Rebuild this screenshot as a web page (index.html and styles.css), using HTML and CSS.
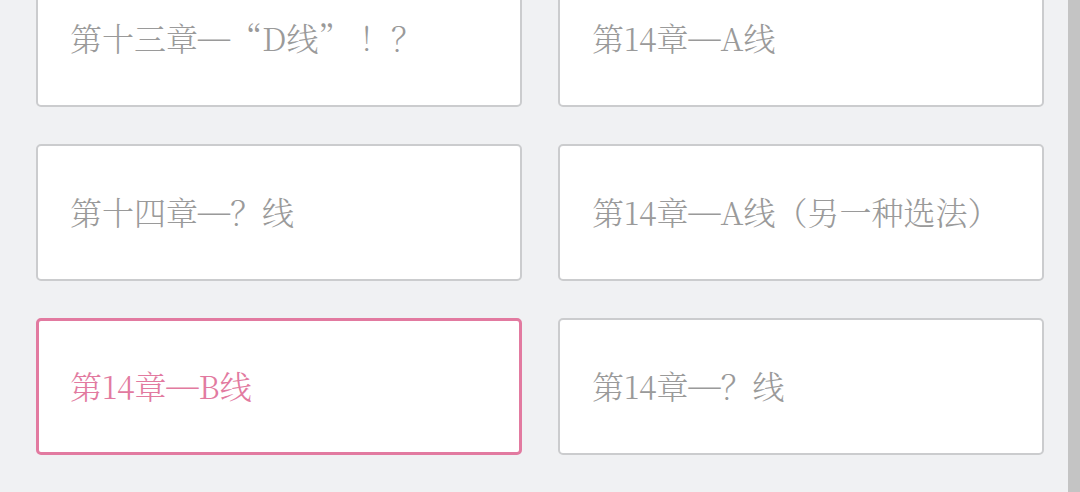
FILE: index.html
```html
<!DOCTYPE html>
<html lang="zh-CN">
<head>
    <meta charset="UTF-8">
    <meta name="viewport" content="width=device-width, initial-scale=1.0">
    <title>章节列表</title>
    <link rel="stylesheet" href="styles.css">
</head>
<body>

<div class="page">
    <div class="chapter-list">
        <a href="#" class="chapter">第十三章<span class="dash">—</span>“D线” ！？</a>
        <a href="#" class="chapter">第14章<span class="dash">—</span>A线</a>
        <a href="#" class="chapter">第十四章<span class="dash">—</span>？线</a>
        <a href="#" class="chapter">第14章<span class="dash">—</span>A线（另一种选法）</a>
        <a href="#" class="chapter current">第14章<span class="dash">—</span>B线</a>
        <a href="#" class="chapter">第14章<span class="dash">—</span>？线</a>
    </div>
    <!-- scroll bar track -->
    <div class="scrollbar"></div>
</div>

</body>
</html>
```

FILE: styles.css
```css
html, body {
    margin: 0;
    padding: 0;
    height: 100%;
    overflow: hidden;
}

body {
    background-color: #f0f1f3;
    font-family: "Noto Serif CJK SC", "Liberation Serif", serif;
}

.page {
    display: flex;
    height: 100%;
}

.chapter-list {
    flex: 1;
    display: grid;
    grid-template-columns: 486px 486px;
    grid-auto-rows: 137px;
    column-gap: 36px;
    row-gap: 37px;
    align-content: start;
    padding-left: 36px;
    margin-top: -30px;
}

.chapter {
    display: flex;
    align-items: center;
    box-sizing: border-box;
    padding-left: 32px;
    padding-bottom: 3px;
    background-color: #fff;
    border: 2px solid #cbccce;
    border-radius: 5px;
    color: #9a9a9a;
    font-size: 32px;
    font-weight: 300;
    text-decoration: none;
    white-space: pre;
}

/* full width dash, drawn edge to edge */
.chapter .dash {
    font-family: "Liberation Serif", serif;
}

/* chapter being read */
.chapter.current {
    border: 3px solid #e27aa0;
    padding-left: 31px;
    color: #e27aa0;
}

.scrollbar {
    width: 12px;
    background-color: #c4c4c4;
}
```
